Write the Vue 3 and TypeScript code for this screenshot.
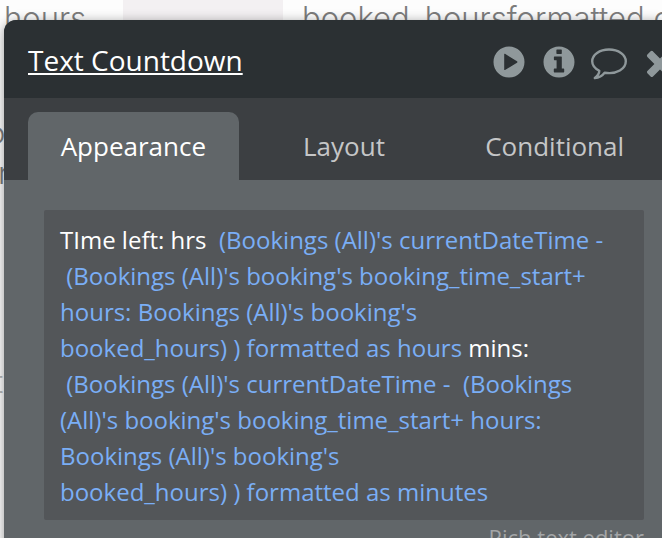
<script setup lang="ts">
import { ref } from 'vue'

interface Segment {
  text: string
  dynamic: boolean
}

const tabs: string[] = ['Appearance', 'Layout', 'Conditional']
const activeTab = ref<string>('Appearance')

const segments: Segment[] = [
  { text: 'TIme left: hrs ', dynamic: false },
  {
    text: "\u00a0(Bookings (All)'s currentDateTime - \u00a0(Bookings (All)'s booking's booking_time_start+ hours: Bookings (All)'s booking's booked_hours)\u00a0)\u00a0formatted as hours",
    dynamic: true,
  },
  { text: ' mins: ', dynamic: false },
  {
    text: "\u00a0(Bookings (All)'s currentDateTime - \u00a0(Bookings (All)'s booking's booking_time_start+ hours: Bookings (All)'s booking's booked_hours)\u00a0)\u00a0formatted as minutes",
    dynamic: true,
  },
]
</script>

<template>
  <div class="workspace">
    <div class="canvas">
      <span class="canvas-text hours">hours</span>
      <span class="canvas-block"></span>
      <span class="canvas-text booked">booked_hoursformatted c</span>
      <span class="canvas-text side-a">o</span>
      <span class="canvas-text side-b">n</span>
      <span class="canvas-text side-c">t</span>
    </div>

    <section class="panel" aria-labelledby="panel-title">
      <header class="header">
        <h1 id="panel-title" class="title">Text Countdown</h1>
        <div class="actions">
          <button type="button" class="action" aria-label="Preview">
            <svg viewBox="0 0 36 36">
              <path fill-rule="evenodd" d="M18 2.500a15.500 15.500 0 1 0 0 31a15.500 15.500 0 0 0 0-31zM13.200 10.200Q13.200 9.400 14 9.800L26 17.200Q27 18 26 18.700L14 26Q13.200 26.400 13.200 25.500z" />
            </svg>
          </button>
          <button type="button" class="action" aria-label="Information">
            <svg viewBox="0 0 36 36">
              <path fill-rule="evenodd" d="M18 2.500a15.500 15.500 0 1 0 0 31a15.500 15.500 0 0 0 0-31zM16 5.500h4.200q.6 0 .6.600v3.200q0 .6-.6.600H16q-.6 0-.6-.6V6.100q0-.6.600-.6zM13.500 12.400h6.700q.6 0 .6.600v11.600h1.800q.6 0 .6.600v2.600q0 .6-.6.600h-9.200q-.6 0-.6-.6v-2.600q0-.6.600-.6h2.200v-8.400h-2.100q-.6 0-.6-.6V13q0-.6.600-.6z" />
            </svg>
          </button>
          <button type="button" class="action" aria-label="Comments">
            <svg class="outline" viewBox="0 0 36 36">
              <path d="M18 5.500C8.500 5.500 1.200 10.700 1.200 17.300C1.200 21.200 4 24.600 8.300 26.800C8.200 30 6.300 32.300 3.800 34C8.800 33.600 11.500 31.500 13.600 28.700C26 30.800 34.800 24.600 34.800 17.300C34.800 10.700 27.500 5.500 18 5.500z" />
            </svg>
          </button>
          <button type="button" class="action" aria-label="Close">
            <svg viewBox="0 0 36 36">
              <path d="M12 7.500L19 14.500l7-7q1.200-1 2.400 0l3.200 3.200q1 1.200 0 2.400L24.600 20l7 7q1 1.200 0 2.400l-3.200 3.200q-1.200 1-2.400 0L19 25.500l-7 7q-1.200 1-2.400 0l-3.200-3.200q-1-1.200 0-2.400l7-7l-7-7q-1-1.200 0-2.400l3.200-3.200q1.200-1 2.400 0z" />
            </svg>
          </button>
        </div>
      </header>

      <div class="tabs" role="tablist">
        <button
          v-for="tab in tabs"
          :key="tab"
          type="button"
          role="tab"
          class="tab"
          :class="{ active: tab === activeTab }"
          :aria-selected="tab === activeTab"
          @click="activeTab = tab"
        >{{ tab }}</button>
      </div>

      <div class="body">
        <div class="editor" role="textbox" aria-label="Text content" contenteditable="true" spellcheck="false"><span v-for="(segment, index) in segments" :key="index" :class="{ dynamic: segment.dynamic }">{{ segment.text }}</span></div>
        <a href="#" class="rich-link">Rich text editor</a>
      </div>
    </section>
  </div>
</template>

<style>
body {
  margin: 0;
  background: #fdfdfd;
}
</style>

<style scoped>
.workspace {
  position: relative;
  height: 100vh;
  overflow: hidden;
  padding: 20px 0 0 4px;
  box-sizing: border-box;
  font-family: "Open Sans", "Noto Sans", sans-serif;
}

.canvas-text {
  position: absolute;
  font-family: Inter, "Open Sans", sans-serif;
  font-size: 31px;
  line-height: 34px;
  font-weight: 300;
  color: #7c7c7c;
  white-space: nowrap;
}

.hours {
  left: 4px;
  top: 1px;
}

.booked {
  left: 302px;
  top: 1px;
}

.canvas-block {
  position: absolute;
  left: 123px;
  top: 0;
  width: 160px;
  height: 40px;
  background: #f3f0f2;
}

.side-a {
  left: -13px;
  top: 116px;
}

.side-b {
  left: -2px;
  top: 156px;
}

.side-c {
  left: -6px;
  top: 365px;
  color: #b8b8b8;
}

.panel {
  position: relative;
  min-height: 100%;
  background: #616669;
  border-radius: 12px 0 0 0;
  box-shadow: 0 2px 12px rgba(0, 0, 0, 0.4);
}

.header {
  display: flex;
  align-items: center;
  justify-content: space-between;
  height: 78px;
  padding-left: 24px;
  background: #2b3033;
  border-radius: 12px 0 0 0;
  overflow: hidden;
}

.title {
  margin: 0;
  padding-top: 2px;
  font-size: 28px;
  line-height: 36px;
  font-weight: 400;
  color: #fff;
  text-decoration: underline;
  text-decoration-thickness: 2px;
  text-underline-offset: 2px;
}

.actions {
  display: flex;
  gap: 14px;
  padding-top: 6px;
  margin-right: -15px;
}

.action {
  width: 36px;
  height: 36px;
  padding: 0;
  border: 0;
  background: none;
  cursor: pointer;
}

.action svg {
  display: block;
  width: 36px;
  height: 36px;
  fill: #8f989b;
}

.action .outline {
  fill: none;
  stroke: #8f989b;
  stroke-width: 2.4;
  stroke-linejoin: round;
}

.tabs {
  display: grid;
  grid-template-columns: repeat(3, 1fr);
  padding: 14px 2px 0 24px;
  background: #3c3f42;
}

.tab {
  height: 68px;
  padding: 0;
  border: 0;
  border-radius: 10px 10px 0 0;
  background: none;
  font-family: inherit;
  font-size: 26px;
  line-height: 36px;
  color: #c5c6c7;
  cursor: pointer;
}

.tab.active {
  background: #616669;
  color: #fff;
}

.body {
  display: flex;
  flex-direction: column;
  gap: 2px;
  padding: 30px 18px 0 40px;
}

.editor {
  padding: 12px 16px 10px;
  border-radius: 2px;
  background: #535659;
  font-size: 24px;
  line-height: 36px;
  color: #fff;
  outline: none;
}

.dynamic {
  color: #7aaef6;
}

.rich-link {
  align-self: flex-end;
  font-size: 22px;
  line-height: 30px;
  color: #a3a5a7;
  text-decoration: none;
}
</style>
